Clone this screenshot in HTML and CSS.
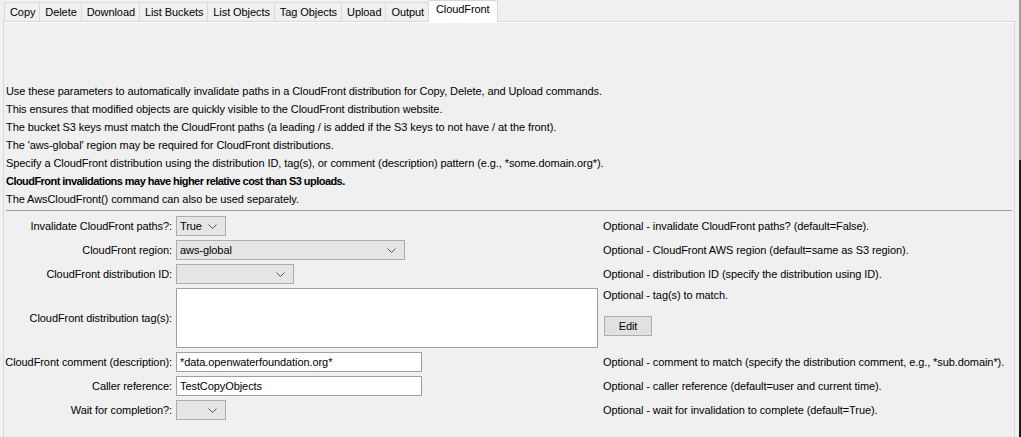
FILE: index.html
```html
<!DOCTYPE html>
<html>
<head>
<meta charset="utf-8">
<link rel="stylesheet" href="styles.css">
</head>
<body>
<div class="window">
  <div class="main">
    <div class="tabs">
      <div class="tab">Copy</div>
      <div class="tab">Delete</div>
      <div class="tab">Download</div>
      <div class="tab">List Buckets</div>
      <div class="tab">List Objects</div>
      <div class="tab">Tag Objects</div>
      <div class="tab">Upload</div>
      <div class="tab">Output</div>
      <div class="tab selected">CloudFront</div>
    </div>
    <div class="panel">
      <div class="info">
        <div class="line">Use these parameters to automatically invalidate paths in a CloudFront distribution for Copy, Delete, and Upload commands.</div>
        <div class="line">This ensures that modified objects are quickly visible to the CloudFront distribution website.</div>
        <div class="line">The bucket S3 keys must match the CloudFront paths (a leading / is added if the S3 keys to not have / at the front).</div>
        <div class="line">The 'aws-global' region may be required for CloudFront distributions.</div>
        <div class="line">Specify a CloudFront distribution using the distribution ID, tag(s), or comment (description) pattern (e.g., *some.domain.org*).</div>
        <div class="line bold">CloudFront invalidations may have higher relative cost than S3 uploads.</div>
        <div class="line">The AwsCloudFront() command can also be used separately.</div>
      </div>
      <div class="sep"></div>
      <div class="form">
        <div class="label">Invalidate CloudFront paths?:</div>
        <div class="ctl"><div class="combo w50"><span class="val">True</span><svg class="chev" width="9" height="5" viewBox="0 0 9 5"><path d="M0.5 0.5 L4.5 4.5 L8.5 0.5" fill="none" stroke="#555" stroke-width="1"/></svg></div></div>
        <div class="note">Optional - invalidate CloudFront paths? (default=False).</div>

        <div class="label">CloudFront region:</div>
        <div class="ctl"><div class="combo w229"><span class="val">aws-global</span><svg class="chev" width="9" height="5" viewBox="0 0 9 5"><path d="M0.5 0.5 L4.5 4.5 L8.5 0.5" fill="none" stroke="#555" stroke-width="1"/></svg></div></div>
        <div class="note">Optional - CloudFront AWS region (default=same as S3 region).</div>

        <div class="label">CloudFront distribution ID:</div>
        <div class="ctl"><div class="combo w118"><span class="val"></span><svg class="chev" width="9" height="5" viewBox="0 0 9 5"><path d="M0.5 0.5 L4.5 4.5 L8.5 0.5" fill="none" stroke="#555" stroke-width="1"/></svg></div></div>
        <div class="note">Optional - distribution ID (specify the distribution using ID).</div>

        <div class="label">CloudFront distribution tag(s):</div>
        <div class="ctl"><div class="textarea"></div></div>
        <div class="note stack">
          <div class="noteline">Optional - tag(s) to match.</div>
          <div class="button">Edit</div>
        </div>

        <div class="label">CloudFront comment (description):</div>
        <div class="ctl"><div class="input w246">*data.openwaterfoundation.org*</div></div>
        <div class="note">Optional - comment to match (specify the distribution comment, e.g., *sub.domain*).</div>

        <div class="label">Caller reference:</div>
        <div class="ctl"><div class="input w246">TestCopyObjects</div></div>
        <div class="note">Optional - caller reference (default=user and current time).</div>

        <div class="label">Wait for completion?:</div>
        <div class="ctl"><div class="combo w50"><span class="val"></span><svg class="chev" width="9" height="5" viewBox="0 0 9 5"><path d="M0.5 0.5 L4.5 4.5 L8.5 0.5" fill="none" stroke="#555" stroke-width="1"/></svg></div></div>
        <div class="note">Optional - wait for invalidation to complete (default=True).</div>
      </div>
    </div>
  </div>
  <div class="edge"></div>
</div>
</body>
</html>
```

FILE: styles.css
```css
* { box-sizing: border-box; }
html, body { margin: 0; padding: 0; }
body {
  background: #f0f0f0;
  font-family: "Liberation Sans", Arial, sans-serif;
  font-size: 11px;
  letter-spacing: -0.08px;
  color: #000;
  overflow: hidden;
}
.window {
  width: 1021px;
  height: 437px;
  display: flex;
  overflow: hidden;
}
.main {
  width: 1019px;
  padding-left: 3px;
  padding-right: 4px;
}
.edge {
  width: 2px;
  background: linear-gradient(#a0a0a0 0, #a0a0a0 160px, #1a1a1a 160px, #1a1a1a 100%);
}
.tabs {
  display: flex;
  height: 21px;
  padding-left: 1px;
  align-items: flex-end;
  position: relative;
  z-index: 1;
}
.tab {
  height: 19px;
  line-height: 18px;
  padding: 0 4px 0 5px;
  border: 1px solid #d9d9d9;
  border-bottom: none;
  border-left: none;
  background: #f0f0f0;
  white-space: nowrap;
}
.tab:first-child { border-left: 1px solid #d9d9d9; }
.selected {
  height: 22px;
  margin-bottom: -1px;
  line-height: 17px;
  background: #fff;
  padding: 0 7px;
}
.panel {
  border: 1px solid #d9d9d9;
  border-bottom: none;
  box-shadow: inset 0 1px 0 #fff;
  height: 420px;
  padding: 60px 0 0 1px;
}
.info { padding-left: 1px; }
.line {
  height: 18px;
  line-height: 18px;
  white-space: nowrap;
}
.bold {
  font-weight: bold;
  letter-spacing: -0.55px;
}
.sep {
  height: 1px;
  background: #a0a0a0;
  margin: 2px 2px 0 1px;
}
.form {
  margin-top: 5px;
  display: grid;
  grid-template-columns: 167px 422px 1fr;
  grid-template-rows: 20px 20px 20px 60px 20px 20px 20px;
  column-gap: 4px;
  row-gap: 4px;
}
.label {
  display: flex;
  align-items: center;
  justify-content: flex-end;
  white-space: nowrap;
}
.ctl { display: flex; align-items: stretch; }
.note {
  padding-left: 1px;
  line-height: 20px;
  white-space: nowrap;
}
.stack { display: flex; flex-direction: column; align-items: flex-start; }
.noteline { line-height: 14px; }
.button {
  margin-top: 14px;
  width: 48px;
  height: 20px;
  margin-left: 1px;
  background: #e1e1e1;
  border: 1px solid #adadad;
  text-align: center;
  line-height: 18px;
}
.combo {
  display: flex;
  align-items: center;
  justify-content: space-between;
  background: #e5e5e5;
  border: 1px solid #acacac;
  padding: 0 8px 0 3px;
}
.val { line-height: 18px; }
.chev { display: block; }
.w50 { width: 50px; }
.w229 { width: 229px; }
.w118 { width: 118px; }
.w246 { width: 246px; }
.textarea {
  width: 422px;
  background: #fff;
  border: 1px solid #a0a0a0;
}
.input {
  background: #fff;
  border: 1px solid #a0a0a0;
  padding: 0 3px;
  line-height: 18px;
  white-space: nowrap;
}
```
